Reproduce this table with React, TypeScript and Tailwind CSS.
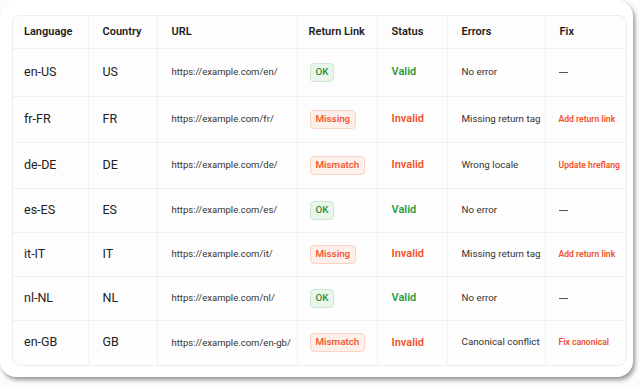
import React from 'react'

type Tone = 'ok' | 'bad'

interface Row {
  lang: string
  country: string
  url: string
  link: 'OK' | 'Missing' | 'Mismatch'
  valid: boolean
  error: string
  fix: string
  h: string
}

const rows: Row[] = [
  { lang: 'en-US', country: 'US', url: 'https://example.com/en/', link: 'OK', valid: true, error: 'No error', fix: '', h: 'h-[48px]' },
  { lang: 'fr-FR', country: 'FR', url: 'https://example.com/fr/', link: 'Missing', valid: false, error: 'Missing return tag', fix: 'Add return link', h: 'h-[46px]' },
  { lang: 'de-DE', country: 'DE', url: 'https://example.com/de/', link: 'Mismatch', valid: false, error: 'Wrong locale', fix: 'Update hreflang', h: 'h-[46px]' },
  { lang: 'es-ES', country: 'ES', url: 'https://example.com/es/', link: 'OK', valid: true, error: 'No error', fix: '', h: 'h-[44px]' },
  { lang: 'it-IT', country: 'IT', url: 'https://example.com/it/', link: 'Missing', valid: false, error: 'Missing return tag', fix: 'Add return link', h: 'h-[44px]' },
  { lang: 'nl-NL', country: 'NL', url: 'https://example.com/nl/', link: 'OK', valid: true, error: 'No error', fix: '', h: 'h-[44px]' },
  { lang: 'en-GB', country: 'GB', url: 'https://example.com/en-gb/', link: 'Mismatch', valid: false, error: 'Canonical conflict', fix: 'Fix canonical', h: 'h-[45px]' }
]

const Badge = ({ label, tone }: { label: string; tone: Tone }) => (
  <div className="flex">
    <span
      className={
        tone === 'ok'
          ? 'flex h-[19px] items-center rounded-[4px] border border-[#cfe7d1] bg-[#eaf6eb] px-[5px] text-[9.8px] font-medium text-[#2b8f3c]'
          : 'flex h-[19px] items-center rounded-[4px] border border-[#fad4c7] bg-[#fdefea] px-[5px] text-[9.8px] font-medium text-[#f2512a]'
      }
    >
      {label}
    </span>
  </div>
)

const headers = ['Language', 'Country', 'URL', 'Return Link', 'Status', 'Errors', 'Fix']

export default function App() {
  return (
    <div className="h-[387px] w-[640px] bg-[#fdfcfd] font-['Roboto',sans-serif]">
      <div className="h-[377px] w-[633px] rounded-[16px] bg-white pb-[11px] pl-3 pr-[6px] pt-[15px] shadow-[2px_3px_4px_rgba(0,0,0,0.4)]">
        <div className="overflow-hidden rounded-[8px] border border-[#ededed] bg-[#fdfdfd]">
          <table className="w-full table-fixed border-collapse">
            <colgroup>
              <col className="w-[75px]" />
              <col className="w-[69px]" />
              <col className="w-[140px]" />
              <col className="w-[80px]" />
              <col className="w-[70px]" />
              <col className="w-[98px]" />
              <col />
            </colgroup>
            <thead>
              <tr className="h-[32px] border-b border-[#efefef]">
                {headers.map((h, i) => (
                  <th
                    key={h}
                    className={`${i === 0 ? 'pl-[11px]' : i === 3 ? 'pl-[11px]' : 'pl-[14px]'} ${i < 6 ? 'border-r border-[#f1f1f1]' : ''} text-left text-[11px] font-semibold text-[#1c1c1c]`}
                  >
                    {h}
                  </th>
                ))}
              </tr>
            </thead>
            <tbody>
              {rows.map((r, idx) => (
                <tr key={r.lang} className={`${r.h} ${idx < rows.length - 1 ? 'border-b border-[#efefef]' : ''}`}>
                  <td className="border-r border-[#f1f1f1] pl-[11px] text-[12.5px] text-[#222]">{r.lang}</td>
                  <td className="border-r border-[#f1f1f1] pl-[14px] text-[12.5px] text-[#222]">{r.country}</td>
                  <td className="border-r border-[#f1f1f1] pl-[14px] text-[9.5px] text-[#333]">{r.url}</td>
                  <td className="border-r border-[#f1f1f1] pl-[12px]">
                    <Badge label={r.link} tone={r.link === 'OK' ? 'ok' : 'bad'} />
                  </td>
                  <td
                    className={`border-r border-[#f1f1f1] pl-[14px] text-[11px] font-semibold ${r.valid ? 'text-[#2b9a3d]' : 'text-[#f2512a]'}`}
                  >
                    {r.valid ? 'Valid' : 'Invalid'}
                  </td>
                  <td className="border-r border-[#f1f1f1] pl-[14px] text-[9.8px] text-[#333]">{r.error}</td>
                  <td className="pl-[13px] text-[8.6px] font-semibold leading-none text-[#f2512a]">
                    {r.fix ? r.fix : <div className="h-px w-[9px] bg-[#555]" />}
                  </td>
                </tr>
              ))}
            </tbody>
          </table>
        </div>
      </div>
    </div>
  )
}
